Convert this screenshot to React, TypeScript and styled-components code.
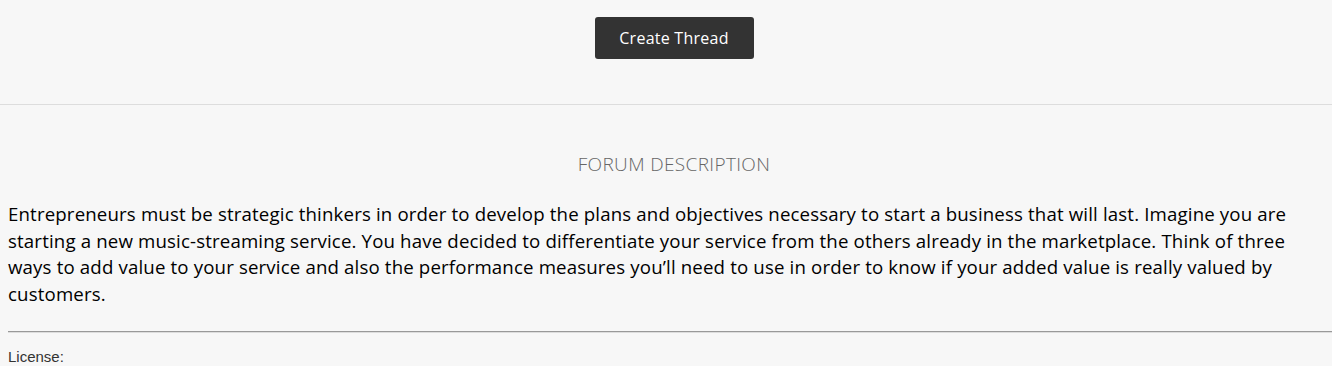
import React from 'react';
import styled, { createGlobalStyle } from 'styled-components';

const GlobalStyle = createGlobalStyle`
  html, body {
    margin: 0;
    padding: 0;
    background-color: #f7f7f7;
  }
  body {
    font-family: 'Open Sans', 'Liberation Sans', sans-serif;
  }
`;

const Page = styled.div`
  display: flex;
  flex-direction: column;
  background-color: #f7f7f7;
`;

const ActionBar = styled.div`
  display: flex;
  justify-content: center;
  align-items: flex-start;
  height: 105px;
  padding: 17px 0 0 16px;
  box-sizing: border-box;
  border-bottom: 1px solid #dddddd;
`;

const PrimaryButton = styled.button`
  width: 159px;
  height: 42px;
  border: none;
  border-radius: 3px;
  background-color: #333333;
  color: #ffffff;
  font-family: 'Open Sans', sans-serif;
  font-size: 16px;
  letter-spacing: 0.25px;
  cursor: pointer;
`;

const Description = styled.section`
  display: flex;
  flex-direction: column;
  padding: 0 8px;
`;

const SectionTitle = styled.h2`
  margin: 47px 0 0;
  padding-left: 16px;
  text-align: center;
  font-family: 'Open Sans', sans-serif;
  font-size: 19px;
  font-weight: 300;
  line-height: 24px;
  letter-spacing: 0.35px;
  color: #666666;
  text-transform: uppercase;
`;

const Body = styled.p`
  margin: 25px 0 0;
  font-family: 'Open Sans', sans-serif;
  font-size: 18.67px;
  line-height: 26.7px;
  letter-spacing: 0.15px;
  color: #000000;
`;

const Rule = styled.hr`
  margin: 23px -8px 0 0;
  border: none;
  border-top: 1px solid #999999;
  border-bottom: 1px solid #dddddd;
`;

const License = styled.div`
  margin-top: 15px;
  font-family: 'Liberation Sans', Arial, sans-serif;
  font-size: 15px;
  color: #333333;
`;

export default function App() {
  return (
    <>
      <GlobalStyle />
      <Page>
        <ActionBar>
          <PrimaryButton>Create Thread</PrimaryButton>
        </ActionBar>
        <Description>
          <SectionTitle>Forum Description</SectionTitle>
          <Body>
            Entrepreneurs must be strategic thinkers in order to develop the plans and objectives
            necessary to start a business that will last. Imagine you are starting a new
            music-streaming service. You have decided to differentiate your service from the others
            already in the marketplace. Think of three ways to add value to your service and also
            the performance measures you’ll need to use in order to know if your added value is
            really valued by customers.
          </Body>
          <Rule />
          <License>License:</License>
        </Description>
      </Page>
    </>
  );
}
